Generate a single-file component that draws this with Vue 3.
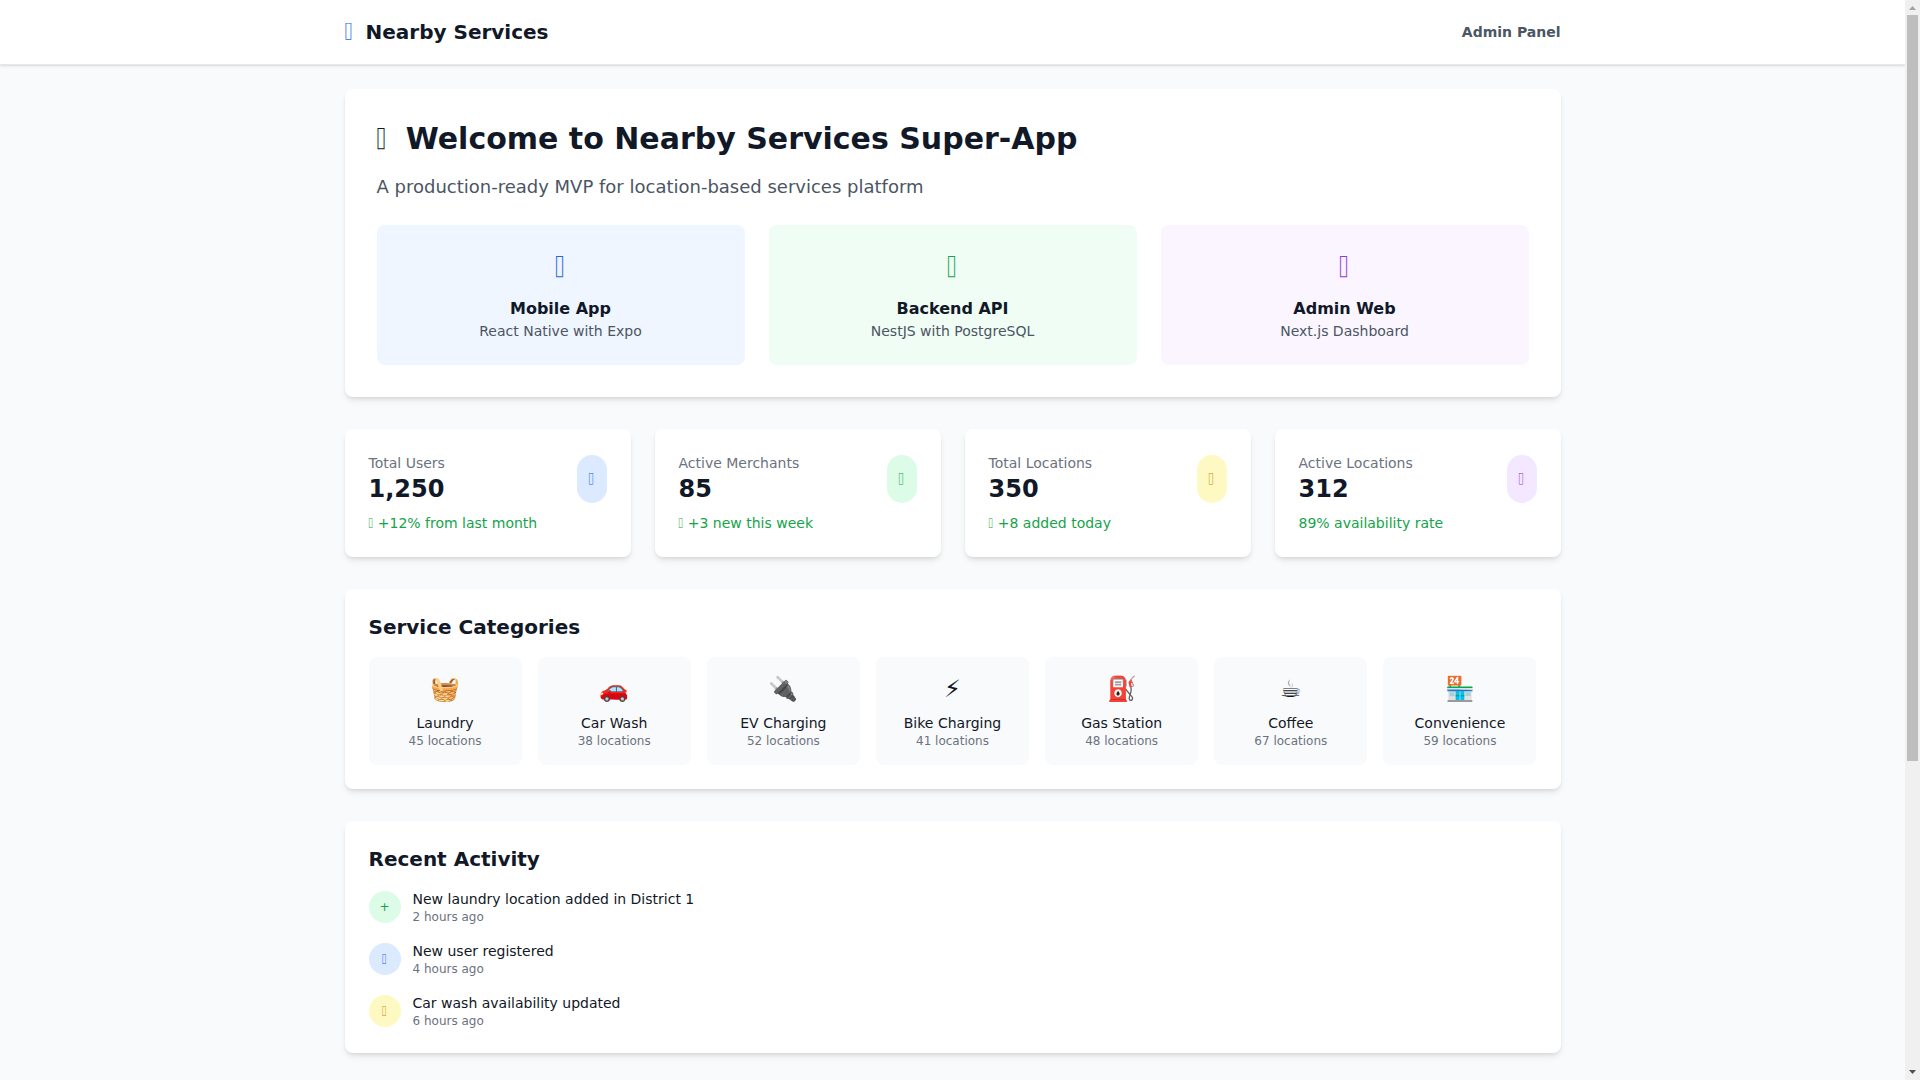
<template>
  <div class="page">
    <nav class="nav">
      <div class="nav-inner">
        <div class="brand"><i class="glyph brand-icon">&#xf3c5;</i><span>Nearby Services</span></div>
        <a class="admin">Admin Panel</a>
      </div>
    </nav>
    <main class="main">
      <section class="card welcome">
        <h1 class="title"><i class="glyph raised title-icon">&#xf135;</i>Welcome to Nearby Services Super-App</h1>
        <p class="subtitle">A production-ready MVP for location-based services platform</p>
        <div class="features">
          <div v-for="f in features" :key="f.name" class="feature" :class="f.tone">
            <div class="feature-icon"><i class="glyph raised">{{ f.icon }}</i></div>
            <h3 class="feature-name">{{ f.name }}</h3>
            <p class="feature-desc">{{ f.desc }}</p>
          </div>
        </div>
      </section>

      <section class="stats">
        <div v-for="s in stats" :key="s.label" class="card stat">
          <div class="stat-top">
            <div>
              <p class="stat-label">{{ s.label }}</p>
              <p class="stat-value">{{ s.value }}</p>
            </div>
            <div class="pill" :class="s.tone"><i class="glyph">{{ s.icon }}</i></div>
          </div>
          <p class="stat-trend"><i v-if="s.trendIcon" class="glyph raised trend-icon">{{ s.trendIcon }}</i>{{ s.trend }}</p>
        </div>
      </section>

      <section class="card block">
        <h2 class="block-title">Service Categories</h2>
        <div class="cats">
          <div v-for="c in cats" :key="c.name" class="cat">
            <div class="cat-emoji">{{ c.emoji }}</div>
            <p class="cat-name">{{ c.name }}</p>
            <p class="cat-count">{{ c.count }} locations</p>
          </div>
        </div>
      </section>

      <section class="card block">
        <h2 class="block-title">Recent Activity</h2>
        <div class="activity">
          <div v-for="a in activity" :key="a.text" class="act">
            <div class="act-icon" :class="a.tone">
              <span v-if="a.icon === '+'" class="plus">+</span>
              <i v-else class="glyph">{{ a.icon }}</i>
            </div>
            <div>
              <p class="act-text">{{ a.text }}</p>
              <p class="act-time">{{ a.time }}</p>
            </div>
          </div>
        </div>
      </section>
    </main>
    <div class="scrollbar" aria-hidden="true">
      <svg class="sb-btn" width="15" height="15" viewBox="0 0 15 15"><polygon points="7.5,6 11,10 4,10" fill="#a3a3a3" /></svg>
      <div class="sb-track"><div class="sb-thumb"></div></div>
      <svg class="sb-btn" width="15" height="15" viewBox="0 0 15 15"><polygon points="4,5 11,5 7.5,9" fill="#505050" /></svg>
    </div>
  </div>
</template>

<script setup>
const features = [
  { name: 'Mobile App', desc: 'React Native with Expo', icon: '\uf3cd', tone: 'soft-blue' },
  { name: 'Backend API', desc: 'NestJS with PostgreSQL', icon: '\uf233', tone: 'soft-green' },
  { name: 'Admin Web', desc: 'Next.js Dashboard', icon: '\uf3fd', tone: 'soft-purple' }
]
const stats = [
  { label: 'Total Users', value: '1,250', icon: '\uf0c0', tone: 'blue', trendIcon: '\uf062', trend: '+12% from last month' },
  { label: 'Active Merchants', value: '85', icon: '\uf54e', tone: 'green', trendIcon: '\uf062', trend: '+3 new this week' },
  { label: 'Total Locations', value: '350', icon: '\uf3c5', tone: 'yellow', trendIcon: '\uf062', trend: '+8 added today' },
  { label: 'Active Locations', value: '312', icon: '\uf058', tone: 'purple', trendIcon: '', trend: '89% availability rate' }
]
const cats = [
  { name: 'Laundry', count: 45, emoji: '🧺' },
  { name: 'Car Wash', count: 38, emoji: '🚗' },
  { name: 'EV Charging', count: 52, emoji: '🔌' },
  { name: 'Bike Charging', count: 41, emoji: '⚡' },
  { name: 'Gas Station', count: 48, emoji: '⛽' },
  { name: 'Coffee', count: 67, emoji: '☕' },
  { name: 'Convenience', count: 59, emoji: '🏪' }
]
const activity = [
  { text: 'New laundry location added in District 1', time: '2 hours ago', icon: '+', tone: 'green' },
  { text: 'New user registered', time: '4 hours ago', icon: '\uf007', tone: 'blue' },
  { text: 'Car wash availability updated', time: '6 hours ago', icon: '\uf021', tone: 'yellow' }
]
</script>

<style>
html, body { margin: 0; background: #f9fafb; }
</style>

<style scoped>
.page {
  box-sizing: border-box;
  min-height: 1520px;
  padding-right: 15px;
  background: #f9fafb;
  font-family: "DejaVu Sans", sans-serif;
  font-size: 16px;
  line-height: 24px;
  color: #111827;
}
.glyph {
  display: inline-block;
  width: 0.625em;
  font-family: "Noto Color Emoji", sans-serif;
  font-size: 0.6em;
  font-style: normal;
  font-weight: 400;
  white-space: nowrap;
}
.raised { line-height: 0; vertical-align: 0.2em; }
h1, h2, h3, p { margin: 0; }

.scrollbar {
  position: fixed;
  top: 0;
  right: 0;
  width: 15px;
  height: 100vh;
  display: flex;
  flex-direction: column;
  background: #f0f0f0;
}
.sb-btn { display: block; flex: none; }
.sb-track { flex: 1; padding: 0 2px; }
.sb-thumb { height: 746px; background: #bebebe; }

.nav { background: #fff; border-bottom: 1px solid #e5e7eb; box-shadow: 0 1px 3px 0 rgba(0,0,0,.1), 0 1px 2px -1px rgba(0,0,0,.1); }
.nav-inner {
  max-width: 1216px;
  margin: 0 auto;
  height: 64px;
  display: flex;
  align-items: center;
  justify-content: space-between;
}
.brand { display: flex; align-items: center; font-size: 20px; line-height: 28px; font-weight: 700; color: #111827; }
.brand-icon { color: #2563eb; margin-right: 12px; font-size: 14.4px; line-height: 32px; }
.admin { font-size: 14px; line-height: 20px; font-weight: 700; color: #4b5563; }

.main { max-width: 1216px; margin: 0 auto; padding: 24px 0; }
.card {
  background: #fff;
  border-radius: 8px;
  box-shadow: 0 4px 6px -1px rgba(0,0,0,.1), 0 2px 4px -2px rgba(0,0,0,.1);
}
.welcome { padding: 32px; margin-bottom: 32px; }
.title { font-size: 30px; line-height: 36px; font-weight: 700; margin-bottom: 16px; }
.title-icon { margin-right: 18px; }
.subtitle { font-size: 18px; line-height: 28px; color: #4b5563; margin-bottom: 24px; }
.features { display: grid; grid-template-columns: repeat(3, 1fr); gap: 24px; }
.feature { padding: 24px; border-radius: 8px; text-align: center; }
.feature-icon { font-size: 30px; line-height: 36px; height: 36px; margin-bottom: 12px; }
.feature-name { font-size: 16px; line-height: 24px; font-weight: 700; color: #111827; }
.feature-desc { font-size: 14px; line-height: 20px; color: #4b5563; }
.soft-blue { background: #eff6ff; }
.soft-blue .feature-icon { color: #2563eb; }
.soft-green { background: #f0fdf4; }
.soft-green .feature-icon { color: #16a34a; }
.soft-purple { background: #faf5ff; }
.soft-purple .feature-icon { color: #9333ea; }

.stats { display: grid; grid-template-columns: repeat(4, 1fr); gap: 24px; margin-bottom: 32px; }
.stat { padding: 24px; }
.stat-top { display: flex; align-items: center; justify-content: space-between; }
.stat-label { font-size: 14px; line-height: 20px; color: #6b7280; }
.stat-value { font-size: 24px; line-height: 32px; font-weight: 700; color: #111827; }
.pill { padding: 12px; border-radius: 9999px; display: flex; align-items: center; height: 24px; }
.stat-trend { margin-top: 8px; font-size: 14px; line-height: 20px; color: #16a34a; }
.trend-icon { margin-right: 4px; }
.blue { background: #dbeafe; color: #2563eb; }
.green { background: #dcfce7; color: #16a34a; }
.yellow { background: #fef9c3; color: #ca8a04; }
.purple { background: #f3e8ff; color: #9333ea; }

.block { padding: 24px; margin-bottom: 32px; }
.block-title { font-size: 20px; line-height: 28px; font-weight: 700; margin-bottom: 16px; color: #111827; }
.cats { display: grid; grid-template-columns: repeat(7, 1fr); gap: 16px; }
.cat { padding: 16px; border-radius: 8px; background: #f9fafb; text-align: center; }
.cat-emoji { font-size: 24px; line-height: 32px; margin-bottom: 8px; }
.cat-name { font-size: 14px; line-height: 20px; color: #111827; }
.cat-count { font-size: 12px; line-height: 16px; color: #6b7280; }

.activity { display: flex; flex-direction: column; gap: 16px; }
.act { display: flex; align-items: center; gap: 12px; }
.act-icon {
  width: 32px; height: 32px; border-radius: 50%;
  display: flex; align-items: center; justify-content: center;
  font-size: 14px; line-height: 20px;
}
.plus { font-size: 12px; line-height: 16px; }
.act-text { font-size: 14px; line-height: 20px; color: #111827; }
.act-time { font-size: 12px; line-height: 16px; color: #6b7280; }
</style>
